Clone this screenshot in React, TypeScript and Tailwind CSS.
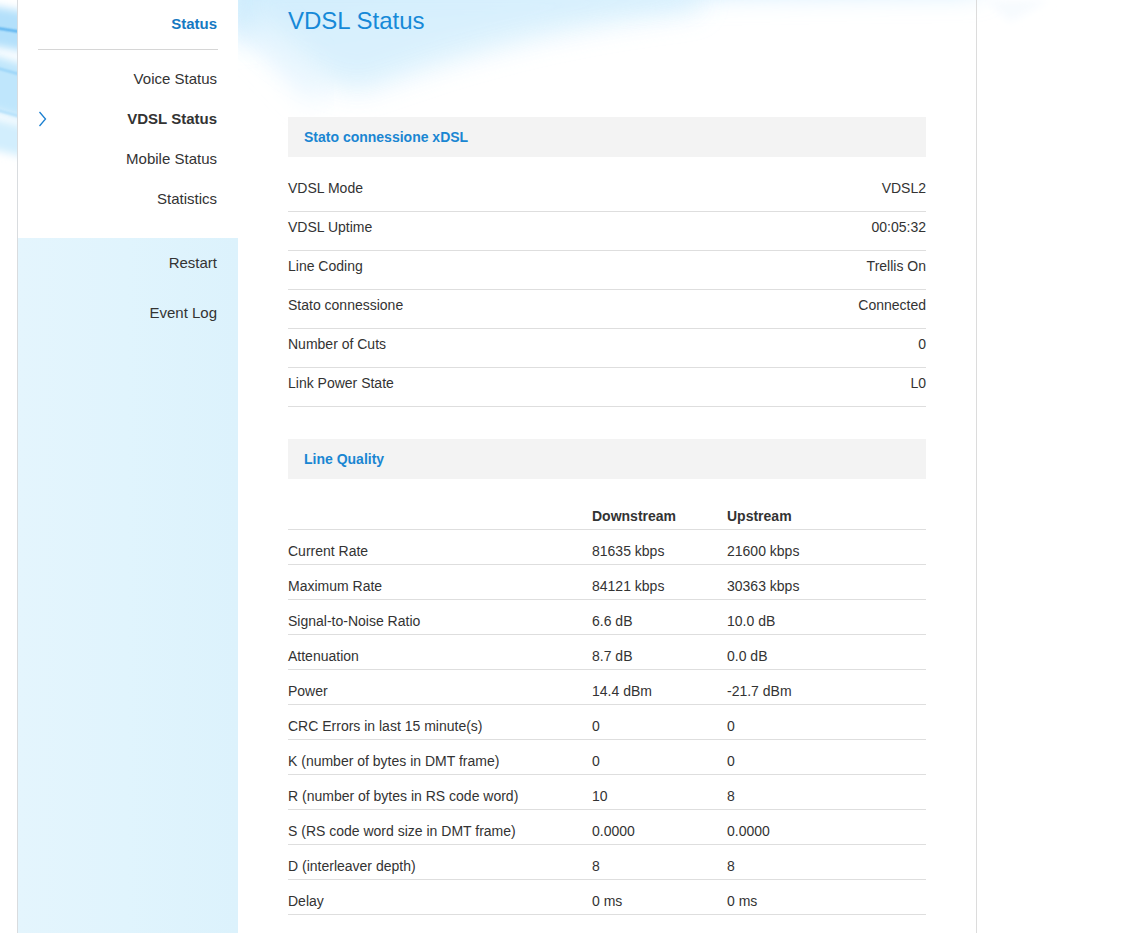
import { Fragment } from 'react'

const font = { fontFamily: '"Liberation Sans", Arial, Helvetica, sans-serif' }

const connection: [string, string][] = [
  ['VDSL Mode', 'VDSL2'],
  ['VDSL Uptime', '00:05:32'],
  ['Line Coding', 'Trellis On'],
  ['Stato connessione', 'Connected'],
  ['Number of Cuts', '0'],
  ['Link Power State', 'L0'],
]

const quality: [string, string, string][] = [
  ['Current Rate', '81635 kbps', '21600 kbps'],
  ['Maximum Rate', '84121 kbps', '30363 kbps'],
  ['Signal-to-Noise Ratio', '6.6 dB', '10.0 dB'],
  ['Attenuation', '8.7 dB', '0.0 dB'],
  ['Power', '14.4 dBm', '-21.7 dBm'],
  ['CRC Errors in last 15 minute(s)', '0', '0'],
  ['K (number of bytes in DMT frame)', '0', '0'],
  ['R (number of bytes in RS code word)', '10', '8'],
  ['S (RS code word size in DMT frame)', '0.0000', '0.0000'],
  ['D (interleaver depth)', '8', '8'],
  ['Delay', '0 ms', '0 ms'],
]

function Swoosh() {
  return (
    <svg
      className="pointer-events-none absolute left-0 top-0"
      width="1132"
      height="260"
      viewBox="0 0 1132 260"
    >
      <defs>
        <filter id="soft" x="-20%" y="-50%" width="140%" height="200%">
          <feGaussianBlur stdDeviation="14" />
        </filter>
        <filter id="softer" x="-20%" y="-50%" width="140%" height="200%">
          <feGaussianBlur stdDeviation="4" />
        </filter>
        <filter id="thin" x="-20%" y="-50%" width="140%" height="200%">
          <feGaussianBlur stdDeviation="1" />
        </filter>
      </defs>
      {/* left edge stripes */}
      <path d="M-40 0 L60 18 L60 58 L-40 40 Z" fill="#b3e0fb" filter="url(#softer)" />
      <path d="M-40 45 L60 75 L60 130 L-40 100 Z" fill="#bfe6fc" filter="url(#softer)" />
      <path d="M-40 110 L60 135 L60 165 L-40 142 Z" fill="#d2eefd" filter="url(#softer)" />
      <path d="M-10 27 L40 35" stroke="#2f9be8" strokeWidth="1.6" filter="url(#thin)" />
      <path d="M-10 66 L40 80" stroke="#8fcff7" strokeWidth="2" filter="url(#thin)" />
      <path d="M-10 108 L40 122" stroke="#a9dbf9" strokeWidth="2" filter="url(#thin)" />
      {/* top band over content */}
      <path
        d="M230 40 C 330 10, 520 -10, 980 -10 L 980 -40 L 230 -40 Z"
        fill="#c2e7fd"
        filter="url(#soft)"
      />
      <path
        d="M240 10 C 260 40, 300 80, 360 90 C 420 70, 520 30, 700 10 L 700 -20 L 240 -20 Z"
        fill="#d5effd"
        filter="url(#soft)"
        opacity="0.9"
      />
      <path d="M250 20 L 320 95" stroke="#e6f5fe" strokeWidth="22" filter="url(#soft)" />
      <path d="M985 0 L1050 0 L1010 22 Z" fill="#f7fbfe" filter="url(#softer)" />
    </svg>
  )
}

function Chevron() {
  return (
    <svg width="9" height="16" viewBox="0 0 9 16" className="text-[#1a7fd0]">
      <polyline
        points="1.5,1 7.5,8 1.5,15"
        fill="none"
        stroke="currentColor"
        strokeWidth="1.3"
      />
    </svg>
  )
}

function Sidebar() {
  const items = ['Voice Status', 'VDSL Status', 'Mobile Status', 'Statistics']
  return (
    <aside className="flex w-[221px] shrink-0 flex-col border-l border-[#d9dcdf]">
      <div className="bg-white pb-[19px] pt-[14px]">
        <div className="h-[20px] pr-[21px] text-right text-[15px] font-bold leading-[20px] text-[#1579c2]">
          Status
        </div>
        <div className="mx-[20px] mt-[15px] h-px bg-[#d6d6d6]" />
        <div className="mt-[9px]">
          {items.map((label) => {
            const active = label === 'VDSL Status'
            return (
              <div
                key={label}
                className="flex h-10 items-center justify-between pl-[20px] pr-[21px] text-[15px] text-[#333]"
              >
                <span className="flex w-[9px]">{active && <Chevron />}</span>
                <span className={active ? 'font-bold' : ''}>{label}</span>
              </div>
            )
          })}
        </div>
      </div>
      <div className="flex-1 bg-gradient-to-r from-[#e4f5fd] via-[#e0f4fd] to-[#dcf2fc]">
        {['Restart', 'Event Log'].map((label) => (
          <div
            key={label}
            className="flex h-[50px] items-center justify-end pr-[21px] text-[15px] text-[#333]"
          >
            {label}
          </div>
        ))}
      </div>
    </aside>
  )
}

function SectionHeader({ title }: { title: string }) {
  return (
    <div className="flex h-10 items-center bg-[#f3f3f3] px-[16px] text-[14px] font-bold text-[#1a86d2]">
      {title}
    </div>
  )
}

export default function App() {
  return (
    <div
      className="relative flex min-h-[933px] w-full overflow-hidden bg-white text-[14px] text-[#333]"
      style={font}
    >
      <Swoosh />
      <div className="w-[17px] shrink-0" />
      <div className="relative flex">
        <Sidebar />
        <main className="w-[739px] shrink-0 border-r border-[#dcdcdc] px-[50px] pb-[18px]">
          <h1 className="h-[42px] text-[24px] font-normal leading-[42px] text-[#1689d8]">
            VDSL Status
          </h1>

          <div className="mt-[75px]">
            <SectionHeader title="Stato connessione xDSL" />
            <div className="mt-[16px]">
              {connection.map(([label, value]) => (
                <div
                  key={label}
                  className="flex justify-between border-b border-[#dedede] pb-[15px] pt-[7px] leading-4"
                >
                  <span>{label}</span>
                  <span>{value}</span>
                </div>
              ))}
            </div>
          </div>

          <div className="mt-[32px]">
            <SectionHeader title="Line Quality" />
            <div className="mt-[16px] grid grid-cols-[304px_135px_1fr]">
              <div className="border-b border-[#dedede] pb-[5px] pt-[13px] leading-4" />
              <div className="border-b border-[#dedede] pb-[5px] pt-[13px] font-bold leading-4">
                Downstream
              </div>
              <div className="border-b border-[#dedede] pb-[5px] pt-[13px] font-bold leading-4">
                Upstream
              </div>
              {quality.map(([label, down, up]) => (
                <Fragment key={label}>
                  <div className="border-b border-[#dedede] pb-[5px] pt-[13px] leading-4">
                    {label}
                  </div>
                  <div className="border-b border-[#dedede] pb-[5px] pt-[13px] leading-4">
                    {down}
                  </div>
                  <div className="border-b border-[#dedede] pb-[5px] pt-[13px] leading-4">
                    {up}
                  </div>
                </Fragment>
              ))}
            </div>
          </div>
        </main>
      </div>
    </div>
  )
}
